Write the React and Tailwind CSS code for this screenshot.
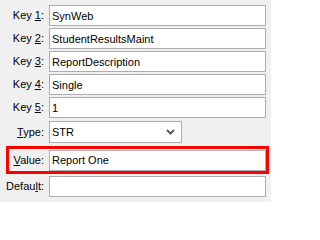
import { useState } from "react";

const keys = [
  { n: "1", value: "SynWeb" },
  { n: "2", value: "StudentResultsMaint" },
  { n: "3", value: "ReportDescription" },
  { n: "4", value: "Single" },
  { n: "5", value: "1" },
];

const inputCls =
  "h-[21px] w-[217px] border border-[#abadb3] bg-white px-[2px] text-[11px] text-black outline-none";

const Chevron = () => (
  <svg width="9" height="6" viewBox="0 0 9 6" className="text-[#5a5a5a]">
    <path d="M1 1 L4.5 4.5 L8 1" fill="none" stroke="currentColor" strokeWidth="2" />
  </svg>
);

const App = () => {
  const [type, setType] = useState("STR");
  const [value, setValue] = useState("Report One");

  return (
    <div
      className="w-[271px] h-[202px] bg-[#f0f0f0] pt-[5px] text-[11px] text-black"
      style={{ fontFamily: '"Liberation Sans", Arial, sans-serif' }}
    >
      <div className="flex flex-col gap-[2px]">
        {keys.map((k) => (
          <div key={k.n} className="flex items-center">
            <label className="w-[45px] pr-[1px] text-right">
              Key <u>{k.n}</u>:
            </label>
            <input className={`ml-[4px] ${inputCls}`} defaultValue={k.value} />
          </div>
        ))}
      </div>

      <div className="mt-[3px] flex items-center">
        <label className="w-[45px] pr-[1px] text-right">
          <u>T</u>ype:
        </label>
        <div className="ml-[4px] flex h-[22px] w-[133px] items-center justify-between border border-[#abadb3] bg-white pl-[2px] pr-[6px]">
          <span>{type}</span>
          <Chevron />
        </div>
      </div>

      <div className="mt-[3px] ml-[6px] flex h-[28px] w-[263px] items-center border-[3px] border-[#ff0000]">
        <label className="w-[36px] pr-[1px] text-right">
          <u>V</u>alue:
        </label>
        <input
          className={`ml-[4px] ${inputCls}`}
          value={value}
          onChange={(e) => setValue(e.target.value)}
        />
      </div>

      <div className="mt-[2px] flex items-center">
        <label className="w-[45px] pr-[1px] text-right">
          Defau<u>l</u>t:
        </label>
        <input className={`ml-[4px] ${inputCls}`} defaultValue="" />
      </div>
    </div>
  );
};

export default App;
